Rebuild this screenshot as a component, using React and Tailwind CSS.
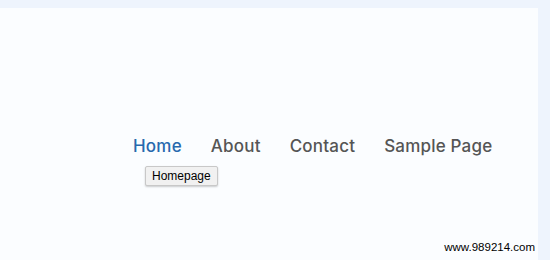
export default function App() {
  return (
    <div className="w-[550px] h-[260px] bg-[#eef4fd] pt-[8px] pr-[12px] overflow-hidden">
      <div className="h-[252px] bg-[#fbfdff] flex flex-col" style={{ fontFamily: 'Inter, "Open Sans", sans-serif' }}>
        <nav className="mt-[121px] pl-[133px] flex items-center gap-[29px] text-[17px] tracking-[0.2px] leading-[34px] font-medium text-[#555]">
          <div className="relative">
            <span className="text-[#2869ae]">Home</span>
            <div className="absolute left-[12px] top-[37px] bg-[#f1f1f1] border border-[#c8c8c8] rounded-[2px] shadow-[0_1px_2px_rgba(0,0,0,0.2)] px-[6px] h-[20px] flex items-center text-[12px] tracking-normal font-normal text-black whitespace-nowrap" style={{ fontFamily: '"Liberation Sans", Arial, sans-serif' }}>
              Homepage
            </div>
          </div>
          <span>About</span>
          <span>Contact</span>
          <span>Sample Page</span>
        </nav>
        <div className="mt-auto mb-[4px] pr-[3px] text-right text-[11.5px] text-black" style={{ fontFamily: '"Liberation Sans", Arial, sans-serif' }}>
          www.989214.com
        </div>
      </div>
    </div>
  );
}
